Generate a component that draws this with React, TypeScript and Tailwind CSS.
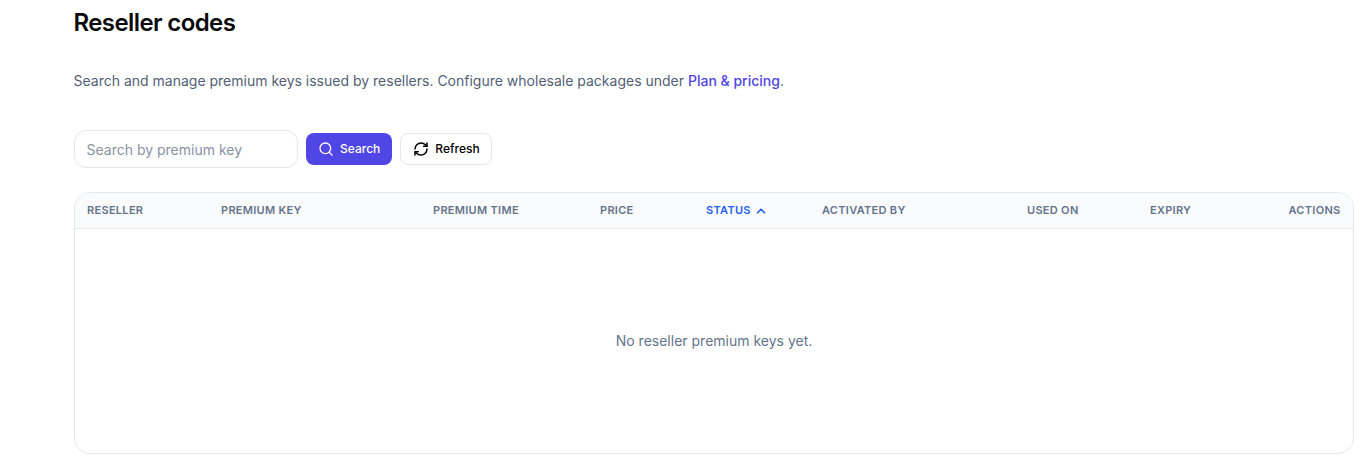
import React from 'react';
import { Search, RefreshCw, ChevronUp } from 'lucide-react';

const columns = [
    { label: 'Reseller', className: 'w-[134px]' },
    { label: 'Premium key', className: 'w-[212px]' },
    { label: 'Premium time', className: 'w-[167px]' },
    { label: 'Price', className: 'w-[106px]' },
    { label: 'Status', className: 'w-[116px] text-[#2563eb]', sorted: true },
    { label: 'Activated by', className: 'w-[205px]' },
    { label: 'Used on', className: 'w-[123px]' },
    { label: 'Expiry', className: 'w-[100px]' },
    { label: 'Actions', className: 'flex-1 justify-end pr-[12.5px]' },
];

export default function App() {
    return (
        <div className="w-[1367px] h-[467px] overflow-hidden bg-white font-['Inter',sans-serif] pl-[74px] pr-[13px] pt-[7px]">
            <h1 className="text-2xl leading-8 font-semibold text-[#0a0a0a] tracking-tight -ml-[0.5px]">Reseller codes</h1>
            <p className="mt-[32px] text-sm leading-5 text-[#525f76] -ml-[0.5px]">
                Search and manage premium keys issued by resellers. Configure wholesale packages under{' '}
                <a className="text-[#4f46e5] font-medium">Plan &amp; pricing</a>.
            </p>
            <div className="mt-[39px] flex items-center gap-2">
                <input
                    placeholder="Search by premium key"
                    className="w-[224px] h-[38px] rounded-xl border border-[#e5e7eb] bg-white pl-[11.5px] pr-3 text-sm outline-none placeholder:text-[#8a93a3]"
                />
                <button className="h-8 px-3 rounded-lg bg-[#4f46e5] text-white text-xs font-medium flex items-center gap-1.5">
                    <Search className="w-4 h-4" />
                    Search
                </button>
                <button className="h-8 pl-3 pr-[11.5px] rounded-lg border border-[#e5e7eb] bg-white text-black text-xs font-medium flex items-center gap-1.5">
                    <RefreshCw className="w-4 h-4" strokeWidth={2.25} />
                    Refresh
                </button>
            </div>
            <div className="mt-[24px] h-[262px] rounded-2xl border border-[#e5e7eb] overflow-hidden flex flex-col">
                <div className="h-9 shrink-0 flex items-center bg-[#fafbfc] border-b border-[#e5e7eb] text-[11px] font-semibold uppercase tracking-[0.3px] text-[#64748b]">
                    {columns.map(col => (
                        <div key={col.label} className={`pl-3 pr-3 flex items-center gap-[3px] ${col.className}`}>
                            {col.label}
                            {col.sorted && <ChevronUp className="w-3.5 h-3.5" strokeWidth={3} />}
                        </div>
                    ))}
                </div>
                <div className="flex-1 flex items-center justify-center text-sm text-[#64748b]">
                    No reseller premium keys yet.
                </div>
            </div>
        </div>
    );
}
